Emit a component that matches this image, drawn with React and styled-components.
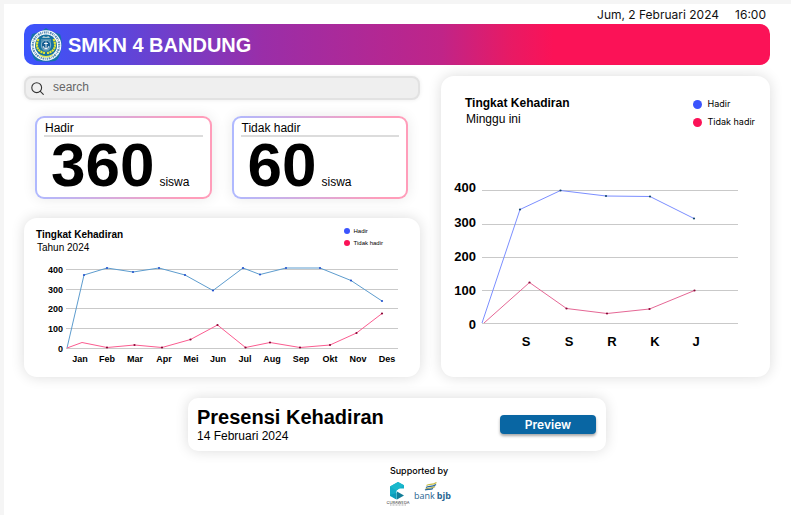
import React from "react";
import styled, { createGlobalStyle } from "styled-components";

const GlobalStyle = createGlobalStyle`
  * { box-sizing: border-box; }
  body {
    margin: 0;
    background: #f5f5f5;
    color: #000;
    font-family: "Liberation Sans", Arial, sans-serif;
  }
  h1, h2, p { margin: 0; }
`;

const Page = styled.main`
  min-height: calc(100vh - 4px);
  margin: 4px 0 0 4px;
  padding: 0 21px 8px 20px;
  background: #fff;
`;

const Clock = styled.div`
  display: flex;
  justify-content: flex-end;
  gap: 16px;
  height: 20px;
  padding-right: 4px;
  font: 400 12px/21px Inter, sans-serif;
  color: #111;
`;

const Banner = styled.header`
  display: flex;
  align-items: center;
  gap: 5px;
  height: 41px;
  padding-left: 5px;
  border-radius: 10px;
  background: linear-gradient(
    90deg,
    #3b54fd 0%,
    #4f4be6 9%,
    #9a2ea8 32%,
    #c02488 56%,
    #e71a65 65%,
    #fb1257 71%
  );
`;

const SchoolName = styled.h1`
  color: #fff;
  font-size: 20px;
  line-height: 24px;
`;

const Columns = styled.div`
  display: grid;
  grid-template-columns: 396fr 329fr;
  gap: 21px;
  margin-top: 11px;
`;

const LeftColumn = styled.div`
  display: flex;
  flex-direction: column;
`;

const SearchBox = styled.label`
  display: flex;
  align-items: center;
  gap: 9px;
  height: 24px;
  padding: 0 5px;
  border: 2px solid #e2e2e2;
  border-radius: 8px;
  background: #efefef;
  box-shadow: 0 0 4px rgba(0, 0, 0, 0.08);
`;

const SearchInput = styled.input`
  flex: 1;
  min-width: 0;
  height: 18px;
  padding: 0 0 2px;
  border: 0;
  outline: 0;
  background: transparent;
  color: #333;
  font: 400 12px/16px "Liberation Sans", Arial, sans-serif;
  &::placeholder { color: #666; opacity: 1; }
`;

const Totals = styled.div`
  display: grid;
  grid-template-columns: 1fr 1fr;
  gap: 20px;
  margin: 16px 12px 19px 11px;
`;

const TotalCard = styled.section`
  height: 83px;
  padding: 3px 7px 0;
  border: 2px solid transparent;
  border-radius: 9px;
  background:
    linear-gradient(#fff, #fff) padding-box,
    linear-gradient(90deg, #afb9ff, #ff9dba 85%) border-box;
  box-shadow: 0 0 14px rgba(0, 0, 0, 0.09);
`;

const TotalLabel = styled.h2`
  padding: 0 1px;
  border-bottom: 2px solid #dcdcdc;
  font-size: 12px;
  font-weight: 400;
  line-height: 14px;
`;

const TotalValue = styled.p`
  display: flex;
  align-items: baseline;
  gap: 5px;
  padding-left: 7px;
  font-size: 12px;
  line-height: 56px;
`;

const Figure = styled.strong`
  font-size: 62px;
  line-height: 56px;
`;

const Card = styled.section`
  border-radius: ${(p) => p.$radius || 13}px;
  background: #fff;
  box-shadow: 0 0 14px rgba(0, 0, 0, 0.14);
`;

const CardHead = styled.div`
  display: flex;
  justify-content: space-between;
  padding: ${(p) => (p.$large ? "19px 15px 0 24px" : "7px 37px 0 12px")};
`;

const CardHeading = styled.div`
  padding-top: ${(p) => (p.$large ? 0 : 3)}px;
`;

const CardTitle = styled.h2`
  font-size: ${(p) => (p.$large ? 12 : 10)}px;
  line-height: ${(p) => (p.$large ? 16 : 13)}px;
`;

const CardSubtitle = styled.p`
  padding-left: 1px;
  font-size: ${(p) => (p.$large ? 12 : 10)}px;
  line-height: ${(p) => (p.$large ? 16 : 13)}px;
`;

const LegendList = styled.ul`
  margin: 0;
  padding: 0;
  list-style: none;
  font-family: ${(p) => (p.$large ? "Inter" : '"Liberation Sans"')}, sans-serif;
  font-size: ${(p) => (p.$large ? 9 : 6)}px;
  line-height: ${(p) => (p.$large ? 18 : 12)}px;
`;

const LegendItem = styled.li`
  display: flex;
  align-items: center;
  gap: ${(p) => (p.$large ? 6 : 4)}px;
  &::before {
    content: "";
    width: ${(p) => (p.$large ? 9 : 6)}px;
    height: ${(p) => (p.$large ? 9 : 6)}px;
    border-radius: 50%;
    background: ${(p) => p.$color};
  }
`;

const ChartSvg = styled.svg`
  display: block;
  width: 100%;
  height: auto;
  margin-top: ${(p) => (p.$large ? 42 : 6)}px;
  font-family: "Liberation Sans", Arial, sans-serif;
  font-weight: 700;
`;

const SessionCard = styled(Card)`
  display: flex;
  align-items: center;
  justify-content: space-between;
  width: 100%;
  max-width: 418px;
  height: 53px;
  margin: 21px auto 0;
  padding: 0 10px 0 9px;
`;

const SessionTitle = styled.h2`
  font-size: 20px;
  line-height: 22px;
`;

const SessionDate = styled.p`
  font-size: 12px;
  line-height: 16px;
`;

const PreviewButton = styled.button`
  width: 96px;
  height: 19px;
  padding: 0;
  border: 0;
  border-radius: 4px;
  background: #0966a3;
  box-shadow: 0 2px 3px rgba(0, 0, 0, 0.35);
  color: #fff;
  font: 600 12px/19px Inter, sans-serif;
  cursor: pointer;
`;

const Footer = styled.footer`
  display: flex;
  flex-direction: column;
  align-items: center;
  gap: 5px;
  padding: 14px 0 0 44px;
  font: 500 9px/12px Inter, sans-serif;
`;

const Sponsors = styled.div`
  display: flex;
  align-items: flex-start;
  gap: 4px;
`;

const BLUE = "#3b54fd";
const PINK = "#fb1257";

const yearly = {
  box: "24 260 396 117",
  left: 66,
  right: 398,
  font: 9,
  labelX: 63,
  rows: [[400, 269, 273], [300, 289, 293], [200, 308, 312], [100, 328, 332], [0, 348, 352]],
  labelY: 362,
  columns: [["Jan", 80], ["Feb", 107], ["Mar", 135], ["Apr", 164], ["Mei", 191], ["Jun", 218], ["Jul", 245], ["Aug", 272], ["Sep", 301], ["Okt", 330], ["Nov", 358], ["Des", 387]],
  series: [
    { line: "#5d9cce", dot: "#2453ce", skip: 1, points: [[67, 348], [84, 275], [107, 268], [133, 272], [159, 268], [185, 275], [213, 290.5], [243, 268], [260, 274.5], [286, 268], [320, 268], [351, 280.5], [382, 301]] },
    { line: "#fb5c90", dot: "#8b0837", skip: 2, points: [[67, 348], [82, 342.5], [107, 347.5], [134.5, 345], [162, 347.5], [190.5, 339.5], [217.5, 325], [245.5, 347.5], [270, 342.5], [300, 347.5], [330, 345], [356.5, 333], [382, 313.5]] },
  ],
};

const weekly = {
  box: "441 173 329 204",
  left: 482,
  right: 738,
  font: 13,
  labelX: 476,
  rows: [[400, 190, 192], [300, 224, 227], [200, 257, 261], [100, 290, 295], [0, 323, 329]],
  labelY: 346,
  columns: [["S", 526], ["S", 569], ["R", 612], ["K", 655], ["J", 696]],
  series: [
    { line: "#7b8eff", dot: "#164870", skip: 1, points: [[482, 323], [520, 209.5], [560.5, 190.5], [606, 196], [650, 196.5], [694, 218.5]] },
    { line: "#e56795", dot: "#8b0837", skip: 1, points: [[484, 323], [529.5, 282.5], [566.5, 308.5], [607, 313.5], [649.5, 309], [694.5, 290.5]] },
  ],
};

function Legend({ large }) {
  return (
    <LegendList $large={large}>
      <LegendItem $large={large} $color={BLUE}>Hadir</LegendItem>
      <LegendItem $large={large} $color={PINK}>Tidak hadir</LegendItem>
    </LegendList>
  );
}

function LineChart({ data, large, label }) {
  return (
    <ChartSvg viewBox={data.box} $large={large} role="img" aria-label={label} fontSize={data.font}>
      {data.rows.map(([value, y, textY]) => (
        <g key={value}>
          <rect x={data.left} y={y} width={data.right - data.left} height="1" fill="#c9c9c9" />
          <text x={data.labelX} y={textY} textAnchor="end">{value}</text>
        </g>
      ))}
      {data.columns.map(([name, x]) => (
        <text key={x} x={x} y={data.labelY} textAnchor="middle">{name}</text>
      ))}
      {data.series.map((s) => (
        <g key={s.line}>
          <polyline points={s.points.join(" ")} fill="none" stroke={s.line} strokeWidth="1" />
          {s.points.slice(s.skip).map(([x, y]) => (
            <circle key={x} cx={x} cy={y} r="1.1" fill={s.dot} />
          ))}
        </g>
      ))}
    </ChartSvg>
  );
}

function ChartCard({ data, period, large }) {
  return (
    <Card>
      <CardHead $large={large}>
        <CardHeading $large={large}>
          <CardTitle $large={large}>Tingkat Kehadiran</CardTitle>
          <CardSubtitle $large={large}>{period}</CardSubtitle>
        </CardHeading>
        <Legend large={large} />
      </CardHead>
      <LineChart data={data} large={large} label={`Tingkat Kehadiran ${period}`} />
    </Card>
  );
}

function Total({ label, value }) {
  return (
    <TotalCard>
      <TotalLabel>{label}</TotalLabel>
      <TotalValue><Figure>{value}</Figure>siswa</TotalValue>
    </TotalCard>
  );
}

function SchoolCrest() {
  return (
    <svg width="34" height="36" viewBox="0 0 34 36" aria-hidden="true">
      <path d="M17 1 Q22 5 31 7 Q34 15 31.5 25 Q30 32 26 34 Q17 35.500 8 34 Q4 32 2.500 25 Q0 15 3 7 Q12 5 17 1Z" fill="#1572a8" />
      <circle cx="17" cy="18.500" r="15.300" fill="#fff" />
      <circle cx="17" cy="18.500" r="13.200" fill="none" stroke="#5b8fb5" strokeWidth="2.200" strokeDasharray="1.300 .8 .7 .9 1.800 .7" />
      <circle cx="17" cy="18.500" r="11" fill="#16719f" />
      <g fill="none" stroke="#e5e62e" strokeWidth="2.200" strokeDasharray="2.200 .6">
        <path d="M9.500 12 C6 19 8.500 25 16 26" />
        <path d="M24.500 12 C28 19 25.500 25 18 26" />
      </g>
      <path d="M12 12h10v8q-1 4-5 5-4-1-5-5z" fill="#4f8fb0" />
      <circle cx="17" cy="18" r="4.700" fill="#155d91" stroke="#9dc4d8" strokeWidth=".8" />
      <path d="M17 14.500v7M15 16.500h4M14 19q.5 2.700 3 2.700T20 19" fill="none" stroke="#fff" strokeWidth=".9" />
      <path d="M13 11l1.500-2 2.500 1 2.500-1 1.500 2z" fill="#a8c6ce" />
      <path d="M10 27q7 4 14 0l-1 2q-6 3-12 0z" fill="#dce55b" />
    </svg>
  );
}

function CurawedaLogo() {
  return (
    <svg width="24" height="24" viewBox="0 0 24 24" role="img" aria-label="Curaweda">
      <path d="M12 0l6 3.300v3.200l-5 .1-2.500 2v8.900L4 14V4.500z" fill="#13adc7" />
      <path d="M4 4.500L12 0l6 3.300-7.500 5.200z" fill="#19b8cc" />
      <path d="M4 13l6.500-2v6.500z" fill="#0b9bb9" />
      <path d="M11 9.500l7 4-7 4z" fill="#127d98" />
      <text x="12" y="21.500" textAnchor="middle" fontSize="4" fontFamily="Inter" fontWeight="400" fill="#333">CURAWEDA</text>
      <path d="M4 23h16" stroke="#888" strokeWidth=".7" strokeDasharray="1 .5" />
    </svg>
  );
}

function BankLogo() {
  return (
    <svg width="38" height="22" viewBox="0 0 38 22" role="img" aria-label="bank bjb" fontFamily="Open Sans" fontSize="9" fill="#286591">
      <g fill="none" strokeWidth="1.300">
        <path d="M12.500 3.500c3-2 6 0 10-3" stroke="#c9bd48" />
        <path d="M12 5.500c3-2 6 0 10-3" stroke="#28679a" />
        <path d="M11.500 7.200c3-2 6 0 9.500-2.700" stroke="#b1ad56" />
        <path d="M11 8c3-1.500 5 .3 8-1.500" stroke="#28679a" />
      </g>
      <text x="0" y="17" fontWeight="400">bank</text>
      <text x="37" y="17" textAnchor="end" fontWeight="700">bjb</text>
    </svg>
  );
}

export default function App() {
  return (
    <>
      <GlobalStyle />
      <Page>
        <Clock><time>Jum, 2 Februari 2024</time><time>16:00</time></Clock>
        <Banner>
          <SchoolCrest />
          <SchoolName>SMKN 4 BANDUNG</SchoolName>
        </Banner>
        <Columns>
          <LeftColumn>
            <SearchBox>
              <svg width="13" height="13" viewBox="0 0 13 13" fill="none" stroke="#333" strokeWidth="1.100" strokeLinecap="round" aria-hidden="true">
                <circle cx="5.700" cy="5.700" r="4.900" />
                <path d="M9.300 9.300l3 3" />
              </svg>
              <SearchInput type="search" placeholder="search" aria-label="search" />
            </SearchBox>
            <Totals>
              <Total label="Hadir" value="360" />
              <Total label="Tidak hadir" value="60" />
            </Totals>
            <ChartCard data={yearly} period="Tahun 2024" />
          </LeftColumn>
          <ChartCard data={weekly} period="Minggu ini" large />
        </Columns>
        <SessionCard $radius={10}>
          <div>
            <SessionTitle>Presensi Kehadiran</SessionTitle>
            <SessionDate>14 Februari 2024</SessionDate>
          </div>
          <PreviewButton type="button">Preview</PreviewButton>
        </SessionCard>
        <Footer>
          <p>Supported by</p>
          <Sponsors><CurawedaLogo /><BankLogo /></Sponsors>
        </Footer>
      </Page>
    </>
  );
}
